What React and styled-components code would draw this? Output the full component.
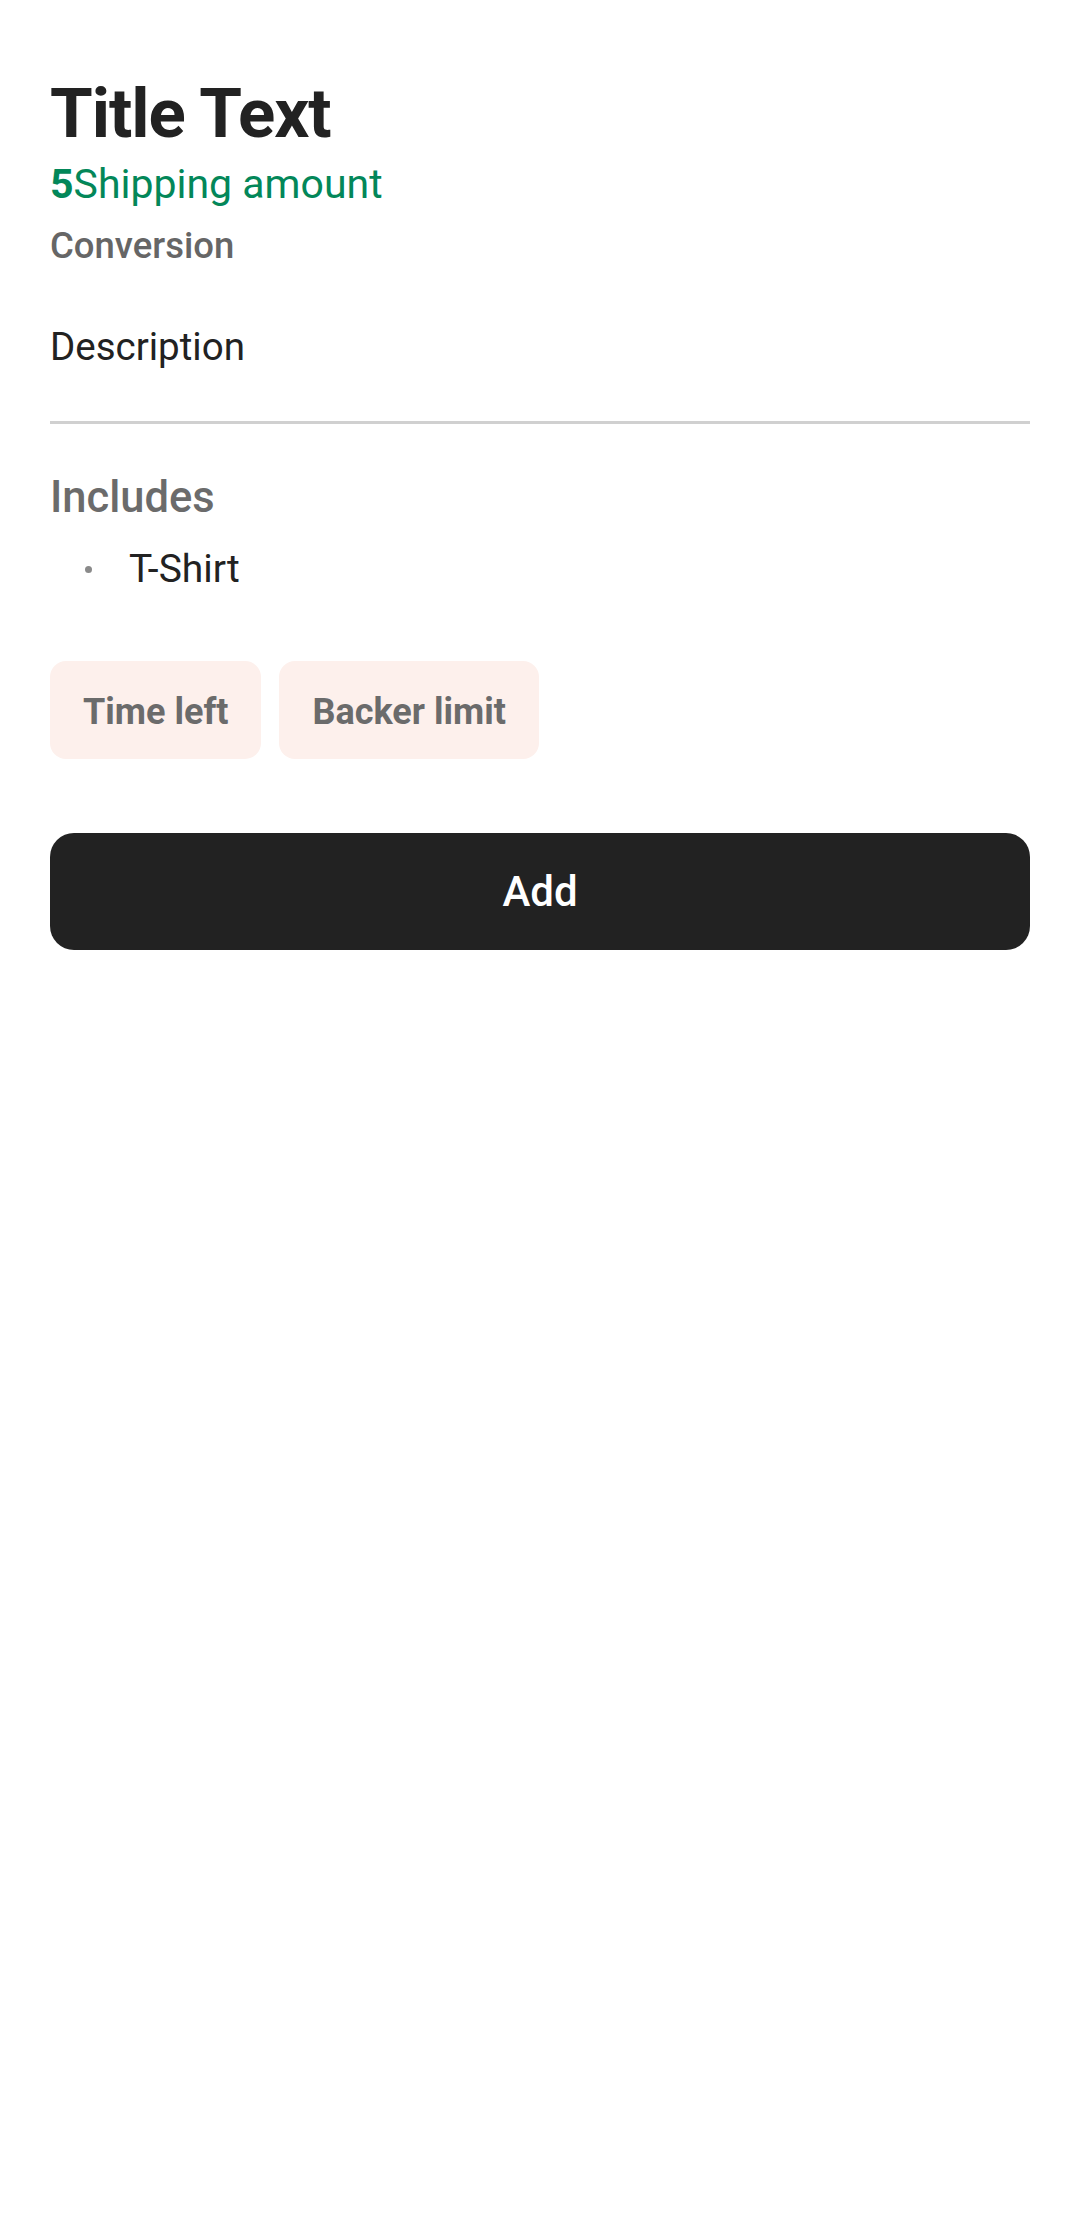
import React from "react";
import styled, { createGlobalStyle } from "styled-components";

const Global = createGlobalStyle`
  html, body { margin: 0; padding: 0; background: #ffffff; }
  body { font-family: Roboto, "Noto Sans", "Liberation Sans", sans-serif; }
  * { box-sizing: border-box; }
`;

const Page = styled.main`
  width: 1080px;
  min-height: 2220px;
  background: #ffffff;
  padding: 73px 50px 0 50px;
  display: flex;
  flex-direction: column;
`;

const Title = styled.h1`
  margin: 0;
  font-size: 69px;
  line-height: 82px;
  font-weight: 700;
  letter-spacing: -1px;
  color: #222222;
`;

const Shipping = styled.div`
  margin-top: 5px;
  font-size: 41px;
  line-height: 48px;
  color: #038759;
  font-weight: 400;
  b { font-weight: 700; }
`;

const Conversion = styled.div`
  margin-top: 17px;
  font-size: 36.5px;
  line-height: 42px;
  font-weight: 500;
  color: #666666;
`;

const Description = styled.p`
  margin: 57px 0 0 0;
  font-size: 38.5px;
  line-height: 45px;
  color: #222222;
`;

const Divider = styled.hr`
  margin: 52px 0 0 0;
  border: 0;
  height: 3px;
  background: #d0d0d0;
`;

const SectionLabel = styled.h2`
  margin: 49px 0 0 0;
  font-size: 43.5px;
  line-height: 50px;
  font-weight: 500;
  color: #6b6b6b;
`;

const List = styled.ul`
  list-style: none;
  margin: 23px 0 0 0;
  padding: 0;
`;

const Item = styled.li`
  display: flex;
  align-items: center;
  font-size: 39px;
  line-height: 46px;
  color: #222222;
  &::before {
    content: "";
    width: 7px;
    height: 7px;
    border-radius: 50%;
    background: #8a8a8a;
    margin: 0 37px 0 35px;
    flex: none;
  }
`;

const Chips = styled.div`
  display: flex;
  gap: 18px;
  margin-top: 69px;
`;

const Chip = styled.span`
  height: 98px;
  padding: 3px 33px 0 33px;
  display: inline-flex;
  align-items: center;
  border-radius: 16px;
  background: #fdf0ec;
  color: #6b6b6b;
  font-size: 36px;
  font-weight: 700;
`;

const AddButton = styled.button`
  margin-top: 74px;
  height: 117px;
  width: 100%;
  border: 0;
  border-radius: 24px;
  background: #222222;
  color: #ffffff;
  font-family: inherit;
  font-size: 42px;
  font-weight: 500;
  padding: 0;
`;

export default function App() {
  return (
    <>
      <Global />
      <Page>
        <Title>Title Text</Title>
        <Shipping>
          <b>5</b>Shipping amount
        </Shipping>
        <Conversion>Conversion</Conversion>
        <Description>Description</Description>
        <Divider />
        <SectionLabel>Includes</SectionLabel>
        <List>
          <Item>T-Shirt</Item>
        </List>
        <Chips>
          <Chip>Time left</Chip>
          <Chip>Backer limit</Chip>
        </Chips>
        <AddButton>Add</AddButton>
      </Page>
    </>
  );
}
